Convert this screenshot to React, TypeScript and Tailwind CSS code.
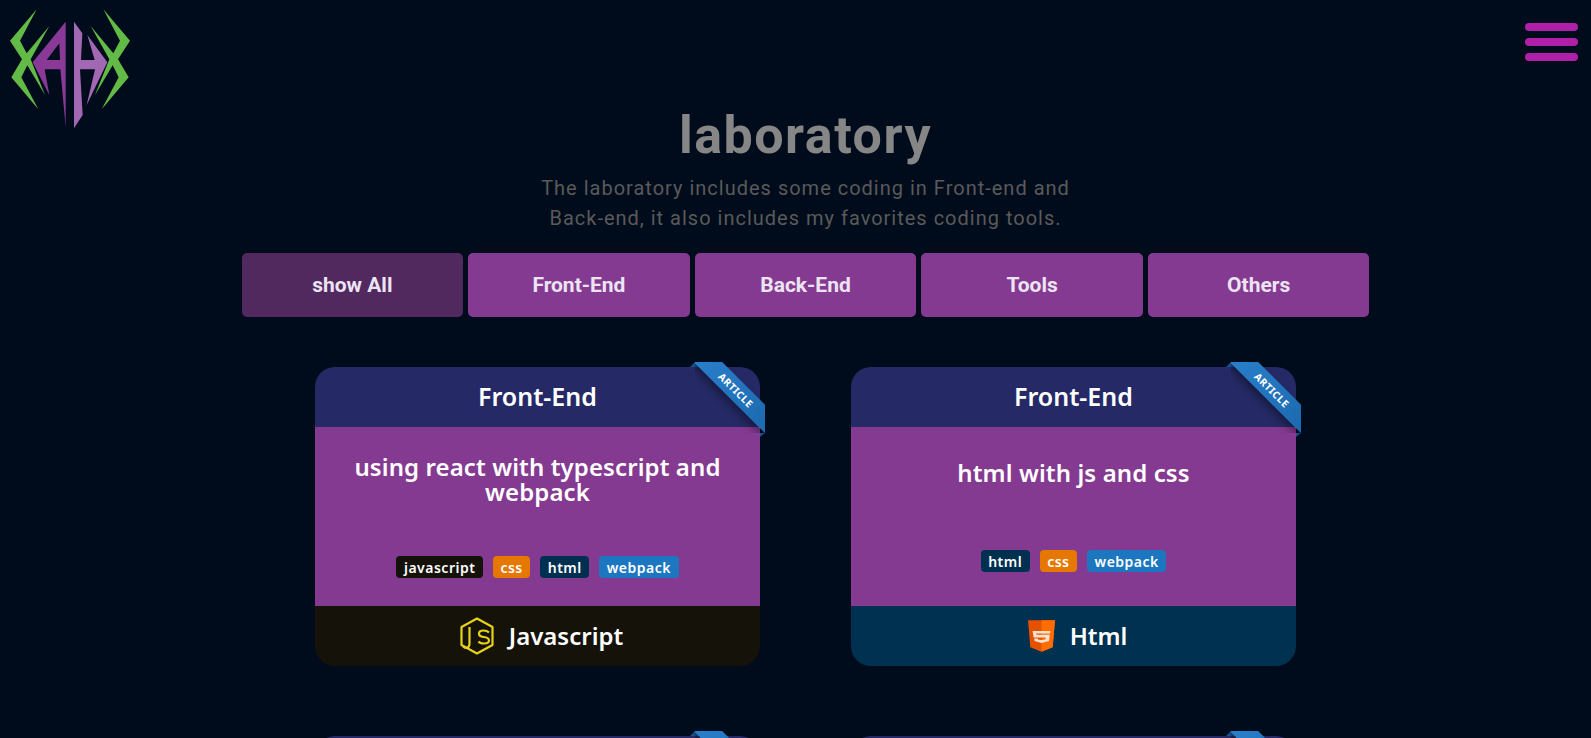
const filters = ['show All', 'Front-End', 'Back-End', 'Tools', 'Others'];

const tagColors: Record<string, string> = {
    javascript: 'bg-[#15120a]',
    css: 'bg-[#e67700]',
    html: 'bg-[#003050]',
    webpack: 'bg-[#1c76c0]',
};

const cards = [
    { title: 'using react with typescript and webpack', tags: ['javascript', 'css', 'html', 'webpack'], lang: 'Javascript', pad: 'pt-[27px]', tagsTop: 'mt-[52px]' },
    { title: 'html with js and css', tags: ['html', 'css', 'webpack'], lang: 'Html', pad: 'pt-[33px]', tagsTop: 'mt-[65px]' },
];

const greenSide = 'M110 28 L30 122 L66 178 L34 232 L115 328 L64 232 L82 196 L135 285 L92 178 L148 78 L80 160 L60 122 Z';

const Logo = () => (
    <svg viewBox="0 0 450 420" className="w-[150px] h-[140px] shrink-0">
        <g fill="#62bb46">
            <path d={greenSide} />
            <path d={greenSide} transform="matrix(-1 0 0 1 420 0)" />
        </g>
        <path fillRule="evenodd" fill="#8a3a96" d="M197 65 L98 187 L148 285 L134 208 L181 208 L197 382 Z M178 130 L140 180 L180 180 Z" />
        <path fill="#a268b4" d="M222 65 L247 100 L243 180 L284 180 L262 105 L322 187 L260 315 L285 208 L240 208 L248 345 L222 385 Z" />
    </svg>
);

const JsIcon = () => (
    <svg viewBox="0 0 34 38" fill="none" stroke="#e7d21a" strokeWidth="2.2" className="w-[34px] h-[38px]">
        <path d="M17 1.5 L32.5 10 V28 L17 36.5 L1.5 28 V10 Z" strokeLinejoin="round" />
        <path d="M9.5 10 V26.5 Q9.5 31 5.5 31 L3 29.5" />
        <path d="M29 15.5 Q27 13.5 23.5 13.5 Q19 13.5 19 16.8 Q19 19.5 23.5 20 Q29 20.5 29 23.5 Q29 26.5 24 26.5 Q20 26.5 18.5 24.5" />
    </svg>
);

const HtmlIcon = () => (
    <svg viewBox="0 0 82 95" className="w-[27px] h-[32px]">
        <path fill="#e65100" d="M0 0 H82 L75 82 L41 95 L7 82 Z" />
        <path fill="#ff6d00" d="M41 0 H82 L75 82 L41 95 Z" />
        <path fill="#fbe3d3" d="M14 32 H68 L67 40 H25 L26 44 H66 L64 63 L41 69 L20 63 L19 55 H30 L30 58 L41 60 L53 58 L54 52 H17 Z" />
    </svg>
);

const Ribbon = ({ label }: { label: boolean }) => (
    <div className="absolute -top-[5px] -right-[5px] w-[70px] h-[75px] pointer-events-none">
        <svg viewBox="0 0 70 75" className="absolute inset-0 w-full h-full overflow-visible">
            <path fill="#174f8c" d="M0 0 L5 5 L-5 5 Z" />
            <path fill="#174f8c" d="M65 71 L70 71 L65 75 Z" />
        </svg>
        <div className="absolute top-0 left-0 w-[70px] h-[71px] overflow-hidden">
            <div className="absolute left-[-14px] top-[18px] w-[110px] h-[20px] rotate-45 bg-gradient-to-r from-[#2a80cc] to-[#1b69ae] shadow-[0_5px_8px_rgba(0,0,0,0.35)] flex items-center justify-center text-white text-[10px] font-bold leading-none tracking-[0.5px] font-['Noto_Sans',sans-serif]">
                {label && 'ARTICLE'}
            </div>
        </div>
    </div>
);

const Card = ({ card }: { card?: (typeof cards)[number] }) => (
    <div className="relative w-[445px] h-[299px] flex flex-col font-['Noto_Sans',sans-serif] text-white">
        <Ribbon label={!!card} />
        <div className="h-[60px] shrink-0 rounded-t-[20px] bg-[#252a66] flex items-center justify-center text-[25px] font-semibold">
            {card && 'Front-End'}
        </div>
        <div className={`h-[179px] shrink-0 bg-[#853a91] text-center ${card?.pad}`}>
            <h2 className="text-[24px] leading-[25px] font-semibold tracking-[0.1px] px-8">{card?.title}</h2>
            <div className={`flex justify-center gap-[10px] ${card?.tagsTop}`}>
                {card?.tags.map((t) => (
                    <span key={t} className={`h-[22px] px-[7.5px] rounded-[4px] flex items-center text-[14px] font-semibold tracking-[0.5px] ${tagColors[t]}`}>
                        {t}
                    </span>
                ))}
            </div>
        </div>
        <div className={`h-[60px] shrink-0 rounded-b-[20px] pl-[8px] flex items-center justify-center gap-[15px] text-[24px] font-semibold ${card?.lang === 'Html' ? 'bg-[#003150]' : 'bg-[#15120a]'}`}>
            {card && (card.lang === 'Html' ? <HtmlIcon /> : <JsIcon />)}
            <span>{card?.lang}</span>
        </div>
    </div>
);

export default function App() {
    return (
        <div className="h-[738px] overflow-hidden bg-[#000c1b] font-['Roboto',sans-serif]">
            <header className="h-[106px] flex justify-between items-start pl-0 pr-[13px]">
                <Logo />
                <button className="mt-[23px] flex flex-col gap-[7px]">
                    <span className="block w-[53px] h-[8px] rounded-full bg-[#b01fa8]" />
                    <span className="block w-[53px] h-[8px] rounded-full bg-[#b01fa8]" />
                    <span className="block w-[53px] h-[8px] rounded-full bg-[#b01fa8]" />
                </button>
            </header>
            <main className="pl-[20px] flex flex-col items-center">
                <h1 className="text-[52px] leading-[60px] font-bold text-[#868686] tracking-[1.5px]">laboratory</h1>
                <p className="mt-[7px] w-[560px] text-center text-[20px] leading-[30px] tracking-[1px] text-[#5a5a5a]">
                    The laboratory includes some coding in Front-end and Back-end, it also includes my favorites coding tools.
                </p>
                <div className="mt-5 flex gap-[5px]">
                    {filters.map((f, i) => (
                        <button key={f} className={`w-[221.6px] h-[64px] rounded-[5px] pt-[1px] text-[21px] font-bold text-[#ece4f2] ${i === 0 ? 'bg-[#51295f]' : 'bg-[#853a91]'}`}>
                            {f}
                        </button>
                    ))}
                </div>
                <div className="mt-[50px] grid grid-cols-2 gap-x-[91px] gap-y-[70px]">
                    {cards.map((c) => (
                        <Card key={c.lang} card={c} />
                    ))}
                    <Card />
                    <Card />
                </div>
            </main>
        </div>
    );
}
